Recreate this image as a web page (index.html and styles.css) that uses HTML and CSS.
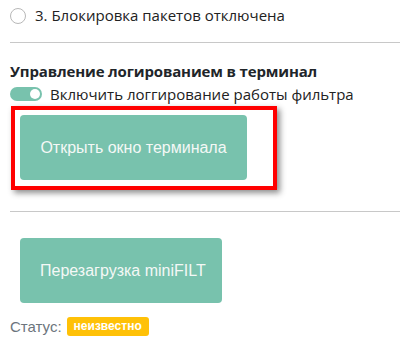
FILE: index.html
```html
<!DOCTYPE html>
<html lang="ru">

<head>
  <meta charset="UTF-8">
  <title>miniFILT</title>
  <link rel="stylesheet" href="styles.css">
</head>

<body>
  <div class="panel">
    <label class="radio-row">
      <span class="radio"></span>
      <span>3. Блокировка пакетов отключена</span>
    </label>

    <hr class="divider">

    <h2 class="section-title">Управление логированием в терминал</h2>
    <label class="switch-row">
      <span class="switch"><span class="knob"></span></span>
      <span>Включить логгирование работы фильтра</span>
    </label>

    <div class="highlight">
      <button class="btn">Открыть окно терминала</button>
    </div>

    <hr class="divider divider-low">

    <button class="btn btn-reboot">Перезагрузка miniFILT</button>

    <div class="status">
      Статус: <span class="badge">неизвестно</span>
    </div>
  </div>
</body>

</html>
```

FILE: styles.css
```css
body {
  margin: 0;
  background: #fff;
  color: #222;
  font-family: 'Open Sans', 'Noto Sans', sans-serif;
}

.panel {
  display: flex;
  flex-direction: column;
  align-items: flex-start;
  padding: 5px 0 0 10px;
}

.radio-row {
  display: flex;
  align-items: center;
  gap: 9px;
  font-size: 15px;
  line-height: 21px;
}

.radio {
  width: 14px;
  height: 14px;
  border: 1px solid #b8b8b8;
  border-radius: 50%;
}

.divider {
  align-self: stretch;
  border: none;
  border-top: 1px solid #c8c8c8;
  margin: 16px 0 0;
}

.section-title {
  font-size: 15px;
  font-weight: 700;
  line-height: 22px;
  letter-spacing: -0.15px;
  margin: 17px 0 0;
  color: #212529;
}

.switch-row {
  display: flex;
  align-items: center;
  gap: 8px;
  font-size: 15px;
  line-height: 20px;
  margin-top: 2px;
}

.switch {
  width: 32px;
  height: 14px;
  border-radius: 7px;
  background: #78c2ad;
  display: flex;
  align-items: center;
  justify-content: flex-end;
  padding: 0 2px;
  box-sizing: border-box;
}

.knob {
  width: 10px;
  height: 10px;
  border-radius: 50%;
  background: #fff;
}

.highlight {
  margin: 2px 0 0 1px;
  width: 253px;
  box-sizing: content-box;
  padding: 5px 0 6px 5px;
  border: 4px solid #ff0000;
  box-shadow: 3px 3px 6px rgba(0, 0, 0, 0.45);
}

.btn {
  display: block;
  box-sizing: border-box;
  font-family: 'Liberation Sans', Arial, sans-serif;
  font-size: 16px;
  color: #f4f8f6;
  background: #78c2ad;
  border: none;
  border-radius: 4px;
  padding: 0 20px;
  height: 65px;
  width: 227px;
  white-space: nowrap;
}

.divider-low {
  margin-top: 21px;
}

.btn-reboot {
  width: 202px;
  margin: 26px 0 0 10px;
}

.status {
  display: flex;
  align-items: center;
  gap: 5px;
  margin-top: 14px;
  font-family: 'Liberation Sans', Arial, sans-serif;
  font-size: 15px;
  line-height: 19px;
  color: #6c757d;
}

.badge {
  background: #ffc107;
  color: #fff;
  font-weight: 700;
  font-size: 12px;
  line-height: 16px;
  padding: 1px 7px 2px;
  border-radius: 3px;
}
```
